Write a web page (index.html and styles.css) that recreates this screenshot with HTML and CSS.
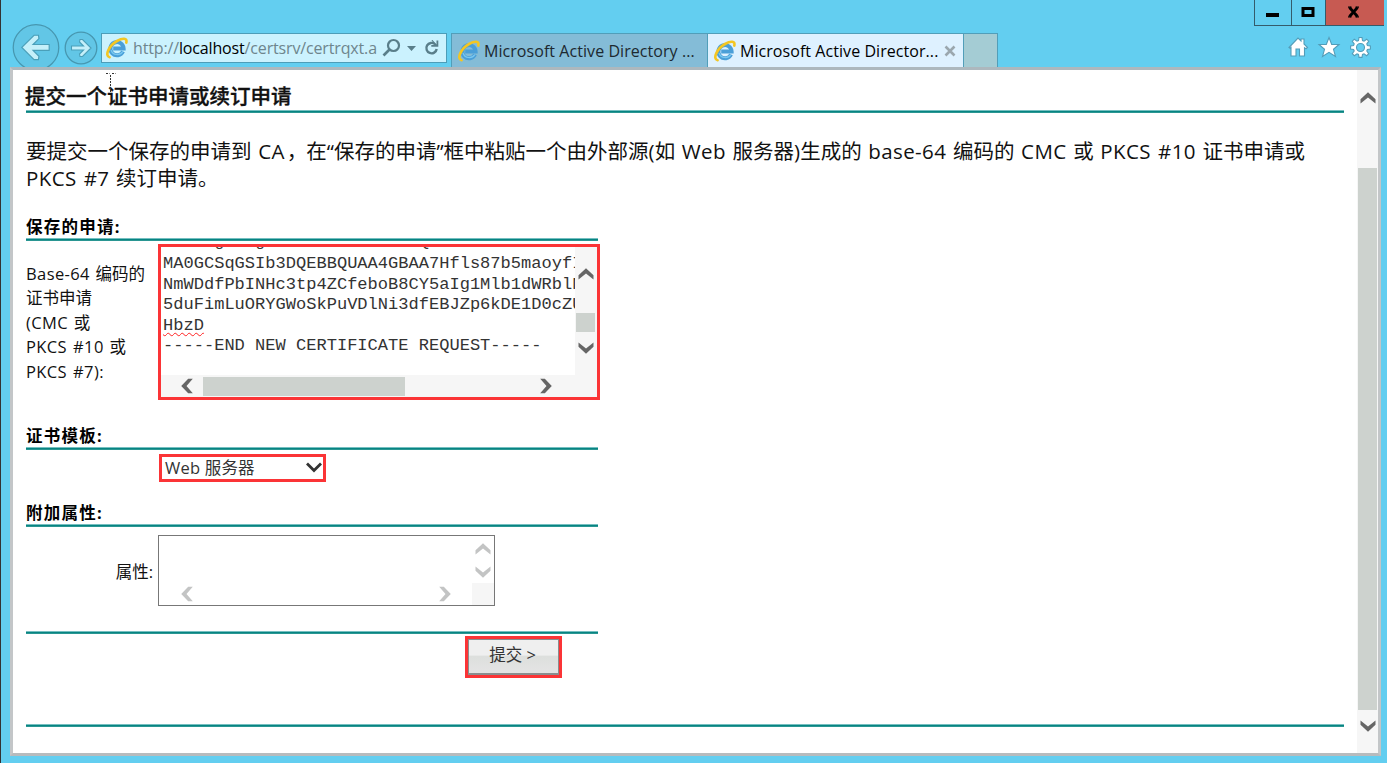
FILE: index.html
```html
<!DOCTYPE html>
<html lang="zh-CN">
<head>
<meta charset="utf-8">
<title>Microsoft Active Directory</title>
<link rel="stylesheet" href="styles.css">
</head>
<body>
<svg class="defs" width="0" height="0">
  <symbol id="ie" viewBox="0 0 22 22">
    <path d="M17 14.500A6.600 6.600 0 1 1 17.600 11.400H7.200" fill="none" stroke="#4a9fd8" stroke-width="4"/>
    <path d="M16.800 14.600A6.600 6.600 0 0 1 5 13" fill="none" stroke="#79c8f0" stroke-width="1.200"/>
    <path d="M3.600 20.200C-1.800 19 3 8.500 11 4 16.500 .8 21.500 .6 20.300 5.600" fill="none" stroke="#f3c623" stroke-width="2.600" stroke-linecap="round"/>
  </symbol>
  <symbol id="up" viewBox="0 0 16 12"><path d="M.5 11.500V7.200L8 .2l7.500 7v4.300L8 5.500z" fill="currentColor"/></symbol>
  <symbol id="down" viewBox="0 0 16 12"><path d="M.5 .5v4.300L8 11.800l7.500-7V.5L8 6.500z" fill="currentColor"/></symbol>
  <symbol id="left" viewBox="0 0 12 16"><path d="M11.800 .8H7.200L.2 8l7 7.200h4.600L5.500 8z" fill="currentColor"/></symbol>
  <symbol id="right" viewBox="0 0 12 16"><path d="M.2 .8h4.600l7 7.200-7 7.200H.2L6.500 8z" fill="currentColor"/></symbol>
</svg>
<div class="window">
  <header class="chrome">
    <div class="nav">
      <svg class="back" viewBox="0 0 48 44"><circle cx="24" cy="24" r="23.300" fill="#62c6e6" stroke="#4797b0" stroke-width="1.300"/><path d="M9.500 24 22 11.500h4.500L27 15l-6 6h16.500v6H21l6 6-.5 3.500H22z" fill="#c5f0fa" stroke="#4a9fb9" stroke-width="1.200"/></svg>
      <svg class="fwd" viewBox="0 0 34 34"><circle cx="17" cy="17" r="15.800" fill="#62c6e6" stroke="#4797b0" stroke-width="1.300"/><path d="M27 17l-8.500 8.500H16l-.5-2.500 4-4H7.500v-4h12l-4-4 .5-2.500h2.500z" fill="#c5f0fa" stroke="#4a9fb9" stroke-width="1.100"/></svg>
      <div class="address">
        <svg class="logo" viewBox="0 0 22 22"><use href="#ie"/></svg>
        <span class="url">http://<b>localhost</b>/certsrv/certrqxt.a</span>
        <svg class="tools" viewBox="0 0 60 24"><g fill="none" stroke="#597e8a"><circle cx="11.500" cy="9.500" r="5.500" stroke-width="2.200"/><path d="M7.500 13.500 1.500 19.500" stroke-width="2.700"/><path d="M53 8.200A5.200 5.200 0 1 0 54.700 13" stroke-width="2.400"/></g><path d="M25 10h9l-4.500 5zM49.500 4l1 0 4 4.500V4.500h1.800v6.300h-7V9h3z" fill="#597e8a"/></svg>
      </div>
    </div>
    <div class="tabs">
      <div class="tab"><svg class="logo" viewBox="0 0 22 22"><use href="#ie"/></svg><span>Microsoft Active Directory ...</span></div>
      <div class="tab active"><svg class="logo" viewBox="0 0 22 22"><use href="#ie"/></svg><span>Microsoft Active Director...</span><svg class="x" viewBox="0 0 12 12"><path d="M1.500 1.500l9 9M10.500 1.500l-9 9" stroke="#9ba7ae" stroke-width="2.600"/></svg></div>
      <div class="tab new"></div>
    </div>
    <div class="right">
      <div class="controls">
        <span><svg viewBox="0 0 36 25"><path d="M11 13h13v4H11z"/></svg></span>
        <span><svg viewBox="0 0 33 25"><path d="M11 8.500h10v7H11z" fill="none" stroke="#000" stroke-width="3"/></svg></span>
        <span class="close"><svg viewBox="0 0 58 25"><path d="M23.500 7.500l8 9M31.500 7.500l-8 9" stroke="#000" stroke-width="2.800"/><path d="M22 7.200h3.500M29.500 7.200H33M22 16.800h3.500M29.500 16.800H33" stroke="#000" stroke-width="1.200"/></svg></span>
      </div>
      <svg class="actions" viewBox="0 0 84 22"><g fill="#fff" stroke="#529db9" stroke-width="1.100"><path d="M1 11.500 10 2l3 3V3h3v5l3.500 3.500-1.500 1.200-1.500-1V20h-5v-7H8v7H3v-8.500l-1 .8z"/><path d="M41 1.500l2.700 7H51l-5.500 4.800 2 7.200-6.500-4.200-6.500 4.200 2-7.200L31 8.500h7.300z"/><path fill-rule="evenodd" d="M71 1.500h3l.5 3 1.500.6 2.700-1.900 2 2-1.900 2.700.6 1.600 3 .5v3l-3 .5-.6 1.500 1.900 2.700-2 2-2.700-1.900-1.500.6-.5 3h-3l-.5-3-1.500-.6-2.700 1.900-2-2 1.900-2.700-.6-1.500-3-.5v-3l3-.5.6-1.600-1.900-2.700 2-2L69 5.100l1.500-.6zM72.500 7.500a4 4 0 1 0 0 8 4 4 0 0 0 0-8z"/></g></svg>
    </div>
  </header>
  <div class="frame">
    <main class="page">
      <h1>提交一个证书申请或续订申请</h1>
      <div class="rule"></div>
      <p class="intro">要提交一个保存的申请到 <em>CA</em><i>，</i>在“保存的申请”框中粘贴一个由外部源(如 <em>Web</em> 服务器)生成的 <em>base-64</em> 编码的 <em>CMC</em> 或 <em>PKCS #10</em> 证书申请或<br><em>PKCS #7</em> 续订申请。</p>
      <h2>保存的申请:</h2>
      <div class="rule short"></div>
      <div class="row request">
        <label class="encoded"><em>Base-64</em> 编码的<br>证书申请<br><em>(CMC</em> 或<br><em>PKCS #10</em> 或<br><em>PKCS #7):</em></label>
        <div class="codebox">
          <div class="upper">
            <pre><span>AwIBAgECAgEBMA0KoZIhvcNAAQE</span>
MA0GCSqGSIb3DQEBBQUAA4GBAA7Hfls87b5maoyfI
NmWDdfPbINHc3tp4ZCfeboB8CY5aIg1Mlb1dWRblN
5duFimLuORYGWoSkPuVDlNi3dfEBJZp6kDE1D0cZU
<u>HbzD</u>
-----END NEW CERTIFICATE REQUEST-----</pre>
            <div class="vbar"><svg class="v"><use href="#up"/></svg><div class="thumb"></div><svg class="v"><use href="#down"/></svg></div>
          </div>
          <div class="hbar"><svg class="h"><use href="#left"/></svg><div class="hthumb"></div><svg class="h"><use href="#right"/></svg></div>
        </div>
      </div>
      <h2>证书模板:</h2>
      <div class="rule short"></div>
      <div class="row template"><div class="select"><span>Web 服务器</span><svg viewBox="0 0 16 12"><path d="M1 2.500 8 9.500l7-7" fill="none" stroke="#333" stroke-width="2.800"/></svg></div></div>
      <h2>附加属性:</h2>
      <div class="rule short"></div>
      <div class="row attrs">
        <label class="attr">属性:</label>
        <div class="attrbox">
          <div class="av"><svg class="v"><use href="#up"/></svg><svg class="v"><use href="#down"/></svg></div>
          <div class="ah"><svg class="h"><use href="#left"/></svg><svg class="h"><use href="#right"/></svg><div class="corner"></div></div>
        </div>
      </div>
      <div class="rule short"></div>
      <div class="row submit"><div class="mark"><button>提交 &gt;</button></div></div>
      <div class="rule"></div>
    </main>
    <div class="scroll"><svg class="v"><use href="#up"/></svg><div class="track"></div><svg class="v"><use href="#down"/></svg></div>
    <svg class="caret" viewBox="0 0 10 22"><path d="M0 .5h3.500M6 .5h3.500M4.500 2v18" stroke="#333" stroke-dasharray="2 1" fill="none"/></svg>
  </div>
</div>
</body>
</html>
```
FILE: styles.css
```css
* { box-sizing: border-box; }
body { margin: 0; background: #63cef0; overflow: hidden; font-family: "Open Sans", "Noto Sans CJK SC", sans-serif; color: #111; }
svg { display: block; flex: none; }
.defs { position: absolute; }
.window { width: 1387px; height: 763px; border-left: 1px solid #333; padding-left: 9px; }
.chrome { height: 67px; display: flex; }
.nav { display: flex; padding: 24px 0 0 2px; width: 441px; flex: none; }
.back { width: 48px; height: 43px; }
.fwd { width: 34px; height: 34px; margin: 7px 7px 0 4px; }
.address { width: 346px; height: 30px; margin: 9px 0 0 -4px; flex: none; background: #cbf2fe; border: 1px solid #4c9db8; display: flex; align-items: center; padding-left: 4px; }
.logo { width: 22px; height: 22px; }
.url { width: 244px; margin-left: 5px; font-size: 16px; letter-spacing: -.15px; color: #6e858d; white-space: nowrap; overflow: hidden; }
.url b { font-weight: 400; color: #000; }
.tools { width: 60px; height: 24px; margin-left: 5px; }
.tabs { display: flex; padding-top: 33px; width: 547px; margin-right: auto; }
.tab { width: 256px; display: flex; align-items: center; background: #84bcd7; border: 1px solid #519eb9; border-width: 1px 0 0 1px; padding-left: 6px; font-size: 16px; letter-spacing: .06px; white-space: nowrap; color: #1d2930; }
.tab span { margin-left: 4px; width: 214px; }
.tab.active { background: #def1ff; color: #000; }
.tab.active span { width: 204px; }
.tab.new { width: 35px; background: #a4ccd4; border-right-width: 1px; }
.x { width: 12px; height: 12px; }
.right { width: 133px; }
.controls { display: flex; width: 130px; height: 26px; border: 1px solid #345b6b; border-top: 0; }
.controls span + span { border-left: 1px solid #345b6b; }
.controls svg { height: 25px; }
.controls .close { background: #c75a52; flex: 1; }
.actions { width: 84px; height: 22px; margin: 10px 0 0 34px; }
.frame { position: relative; width: 1371px; height: 689px; border: 3px solid #bbbec0; border-color: #adb8be #c3c6c8 #b7bbbd #c3c6c8; background: #fff; display: flex; justify-content: space-between; }
.page { width: 1331px; padding-left: 13px; }
em { font-style: normal; letter-spacing: .4px; }
h1, h2, p { margin: 0; }
h1 { height: 40px; padding-top: 12px; font-size: 20.500px; line-height: 29px; font-weight: 500; -webkit-text-stroke: .35px #111; white-space: nowrap; margin-left: -1px; }
.rule { height: 3px; background: linear-gradient(#75bfc0 0 1px, #078482 1px 2px, #2a9692 2px); }
.short { width: 572px; }
.intro { height: 104px; padding-top: 25px; font-size: 20.500px; line-height: 26.500px; word-spacing: 1.300px; white-space: nowrap; }
.intro i { font-style: normal; padding-left: 2px; margin-right: -1px; }
h2 { height: 21px; font-size: 16.500px; line-height: 20px; letter-spacing: 1.250px; font-weight: 700; color: #000; }
.row { display: flex; }
.request { height: 185px; }
.encoded { width: 132px; padding-top: 21px; font-size: 16.500px; line-height: 24.400px; word-spacing: 1.300px; white-space: nowrap; }
.codebox { width: 442px; height: 156px; margin-top: 3px; border: 3px solid #fb3436; background: #f6f6f6; }
.upper { display: flex; height: 128px; overflow: hidden; }
pre { width: 414px; height: 141px; margin: -13px 0 0; padding-left: 2px; overflow: hidden; background: #fff; font: 17.060px/20.450px "Liberation Mono", monospace; color: #333; }
pre span { position: relative; top: -2px; }
pre u { text-decoration: underline wavy #f22 1px; text-underline-offset: 2px; }
.vbar { width: 22px; color: #666; display: flex; flex-direction: column; align-items: center; padding-top: 21px; }
.v { width: 16px; height: 12px; }
.h { width: 12px; height: 16px; }
.vbar .thumb { width: 19px; height: 19px; margin: 33px 1px 10px 0; background: #cdd2ce; }
.hbar { height: 22px; display: flex; align-items: center; padding-left: 20px; color: #666; }
.hthumb { width: 202px; height: 19px; background: #cdd2ce; margin: 0 135px 0 10px; }
.template { height: 53px; padding: 4px 0 0 133px; }
.select { width: 167px; height: 28px; border: 3px solid #fb3436; display: flex; justify-content: space-between; align-items: center; font-size: 16.500px; padding: 0 1px 2px 3px; color: #333; }
.select span { letter-spacing: .2px; }
.select svg { width: 16px; height: 12px; }
.attrs { height: 104px; padding-top: 8px; }
.attr { width: 132px; padding: 25px 5px 0 0; text-align: right; font-size: 16.500px; line-height: 24px; }
.attrbox { width: 337px; height: 71px; border: 1px solid #777; color: #c3c4c4; }
.av { height: 47px; padding: 7px 0 0 316px; display: flex; flex-direction: column; gap: 11px; }
.ah { height: 22px; display: flex; align-items: center; padding-left: 22px; }
.ah .h + .h { margin-left: 246px; }
.corner { width: 22px; height: 22px; margin-left: auto; background: #f6f6f6; }
.submit { height: 90px; padding: 2px 0 0 439px; }
.mark { width: 97px; height: 42px; border: 3px solid #fb3436; }
button { width: 91px; height: 36px; border: 1px solid #8a8d8e; border-width: 1px 1px 2px; padding: 0 2px 5px 0; font: 16.500px "Open Sans", "Noto Sans CJK SC", sans-serif; color: #333; background: linear-gradient(#efefef 0 45%, #dddfdd 50%, #e4e4e4); }
.scroll { width: 21px; background: #f6f6f6; color: #666; display: flex; flex-direction: column; align-items: center; padding-top: 22px; }
.track { width: 19px; height: 542px; margin: 64px 0 10px; background: #cdd2ce; }
.caret { position: absolute; left: 93px; top: 3px; width: 10px; height: 22px; }
```
